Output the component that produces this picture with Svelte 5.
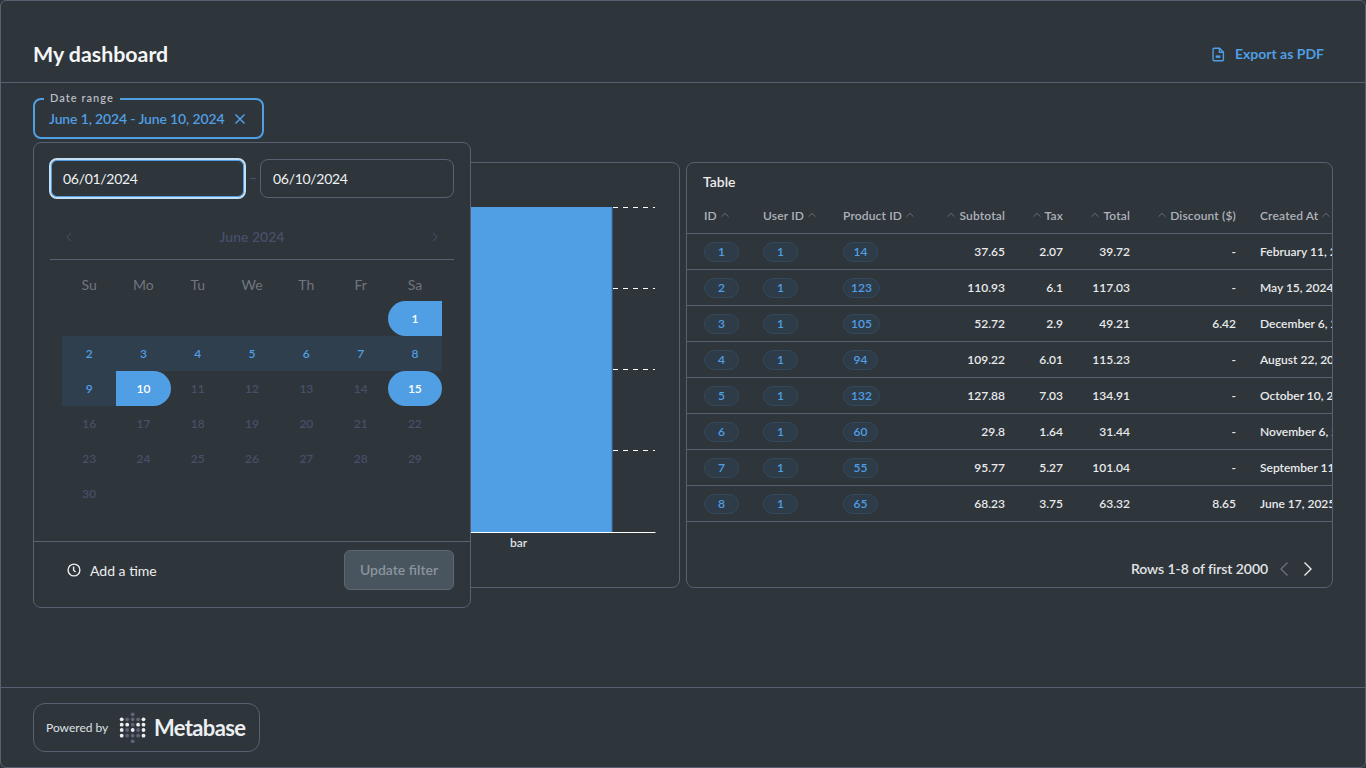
<script>
  const dayNames = ['Su', 'Mo', 'Tu', 'We', 'Th', 'Fr', 'Sa'];
  const days = [];
  for (let i = 0; i < 6; i++) days.push({ n: null, c: '' });
  for (let d = 1; d <= 30; d++) {
    let c = 'off';
    if (d === 1) c = 'start';
    else if (d === 10) c = 'end';
    else if (d === 15) c = 'solo';
    else if (d < 10) c = 'range';
    days.push({ n: d, c });
  }
  const columns = [
    { label: 'ID', kind: 'l', cls: 'c1' },
    { label: 'User ID', kind: 'l', cls: 'c2' },
    { label: 'Product ID', kind: 'l', cls: 'c3' },
    { label: 'Subtotal', kind: 'r', cls: 'c4' },
    { label: 'Tax', kind: 'r', cls: 'c5' },
    { label: 'Total', kind: 'r', cls: 'c6' },
    { label: 'Discount ($)', kind: 'r', cls: 'c7' },
    { label: 'Created At', kind: 'l', cls: 'c8' }
  ];
  const rows = [
    [1, 1, 14, '37.65', '2.07', '39.72', '-', 'February 11, 2025, 9:40 PM'],
    [2, 1, 123, '110.93', '6.1', '117.03', '-', 'May 15, 2024, 8:04 AM'],
    [3, 1, 105, '52.72', '2.9', '49.21', '6.42', 'December 6, 2024, 10:22 PM'],
    [4, 1, 94, '109.22', '6.01', '115.23', '-', 'August 22, 2025, 4:30 AM'],
    [5, 1, 132, '127.88', '7.03', '134.91', '-', 'October 10, 2024, 3:34 AM'],
    [6, 1, 60, '29.8', '1.64', '31.44', '-', 'November 6, 2025, 4:06 PM'],
    [7, 1, 55, '95.77', '5.27', '101.04', '-', 'September 11, 2025, 3:03 AM'],
    [8, 1, 65, '68.23', '3.75', '63.32', '8.65', 'June 17, 2025, 2:37 AM']
  ];
  const gridlines = [207.5, 288.5, 369.5, 450.5];
  const logoX = [2.7, 8.2, 13.7, 19.1, 24.5];
  const logoY = [7.3, 12.7, 18, 23.7];
  const bright = new Set(['0,0', '4,0', '0,1', '1,1', '3,1', '4,1', '0,2', '2,2', '4,2', '0,3', '4,3']);
  const logoDots = [];
  logoY.forEach((y, r) => logoX.forEach((x, c) => logoDots.push({ x, y, on: bright.has(c + ',' + r) })));
</script>

<div class="page">
  <header class="head">
    <h1>My dashboard</h1>
    <button class="export">
      <svg width="13" height="15" viewBox="0 0 14 16" fill="none" stroke="currentColor" stroke-width="1.5">
        <path d="M2.5 1.2h5.6l4.2 4.2v8a1.4 1.4 0 0 1-1.4 1.4H2.5a1.4 1.4 0 0 1-1.4-1.4V2.6a1.4 1.4 0 0 1 1.4-1.4z" />
        <path d="M8 1.4v4.2h4.2" />
        <rect x="4" y="9" width="5" height="2.6" fill="currentColor" stroke="none" />
      </svg>
      Export as PDF
    </button>
  </header>

  <main class="body">
    <div class="filter-row">
      <div class="filter">
        <span class="legend">Date range</span>
        <span class="value">June 1, 2024 - June 10, 2024</span>
        <svg class="clear" width="12" height="12" viewBox="0 0 12 12" stroke="currentColor" stroke-width="1.5" fill="none">
          <path d="M1.5 1.5l9 9M10.5 1.5l-9 9" />
        </svg>
      </div>
    </div>

    <div class="cards">
      <section class="card chart-card">
        <svg class="chart" width="645" height="424" viewBox="34 163 645 424">
          <rect x="100" y="207" width="512" height="325" fill="#509ee3" />
          <rect x="611.5" y="207" width="1" height="325" fill="#4079b5" />
          {#each gridlines as y}
            <line x1="612" x2="655" y1={y} y2={y} stroke="#fff" stroke-dasharray="5 5" stroke-dashoffset="-1" />
          {/each}
          <line x1="100" x2="655.5" y1="532.5" y2="532.5" stroke="#fff" />
          <text x="518.5" y="547" text-anchor="middle">bar</text>
        </svg>
      </section>

      <section class="card table-card">
        <h2>Table</h2>
        <div class="table">
          <div class="row header">
            {#each columns as col}
              <div class="cell {col.cls} {col.kind}">
                {#if col.kind === 'r'}
                  <svg class="sort" width="10" height="6" viewBox="0 0 10 6" fill="none" stroke="currentColor"><path d="M1.5 4.7L5 1.3l3.5 3.4" /></svg>
                {/if}
                <span>{col.label}</span>
                {#if col.kind === 'l'}
                  <svg class="sort" width="10" height="6" viewBox="0 0 10 6" fill="none" stroke="currentColor"><path d="M1.5 4.7L5 1.3l3.5 3.4" /></svg>
                {/if}
              </div>
            {/each}
          </div>
          {#each rows as r}
            <div class="row">
              {#each r as v, i}
                <div class="cell {columns[i].cls} {columns[i].kind}">
                  {#if i < 3}
                    <span class="pill">{v}</span>
                  {:else}
                    <span class="val">{v}</span>
                  {/if}
                </div>
              {/each}
            </div>
          {/each}
        </div>
        <div class="pager">
          <span>Rows 1-8 of first 2000</span>
          <svg class="prev" width="10" height="16" viewBox="0 0 10 16" fill="none" stroke="currentColor" stroke-width="1.4"><path d="M8.5 1.5L2 8l6.5 6.5" /></svg>
          <svg class="next" width="10" height="16" viewBox="0 0 10 16" fill="none" stroke="currentColor" stroke-width="1.4"><path d="M1.5 1.5L8 8l-6.5 6.5" /></svg>
        </div>
      </section>
    </div>

    <div class="popover">
      <div class="inputs">
        <div class="input focus">06/01/2024</div>
        <span class="dash"></span>
        <div class="input">06/10/2024</div>
      </div>
      <div class="month">
        <svg width="6" height="10" viewBox="0 0 6 10" fill="none" stroke="currentColor"><path d="M5 1L1 5l4 4" /></svg>
        <span>June 2024</span>
        <svg width="6" height="10" viewBox="0 0 6 10" fill="none" stroke="currentColor"><path d="M1 1l4 4-4 4" /></svg>
      </div>
      <div class="names">
        {#each dayNames as d}<span>{d}</span>{/each}
      </div>
      <div class="days">
        {#each days as d}
          <span class="day {d.c}">{d.n ?? ''}</span>
        {/each}
      </div>
      <div class="pop-foot">
        <span class="add-time">
          <svg width="14" height="14" viewBox="0 0 14 14" fill="none" stroke="currentColor" stroke-width="1.4">
            <circle cx="7" cy="7" r="5.9" />
            <path d="M6.6 3.6v3.6l2 1.9" />
          </svg>
          Add a time
        </span>
        <button class="update">Update filter</button>
      </div>
    </div>
  </main>

  <footer class="foot">
    <div class="powered">
      <span class="by">Powered by</span>
      <svg width="27" height="31" viewBox="0 0 27 31">
        <circle cx="13.7" cy="2.3" r="1.9" fill="#5f6577" />
        {#each logoDots as d}
          <circle cx={d.x} cy={d.y} r="1.9" fill={d.on ? '#eceff1' : '#5f6577'} />
        {/each}
        <circle cx="13.7" cy="29.3" r="1.9" fill="#5f6577" />
      </svg>
      <span class="brand">Metabase</span>
    </div>
  </footer>
</div>

<style>
  :global(body) {
    margin: 0;
    background: #2e353b;
  }
  .page {
    box-sizing: border-box;
    width: 1366px;
    height: 768px;
    border: 1px solid #5a6072;
    border-radius: 6px;
    background: #2e353b;
    font-family: Lato, sans-serif;
    color: #fff;
    display: flex;
    flex-direction: column;
    overflow: hidden;
  }
  .head {
    box-sizing: border-box;
    height: 82px;
    flex: none;
    padding: 33px 32px 0;
    display: flex;
    justify-content: space-between;
    align-items: flex-start;
    border-bottom: 1px solid #5a6072;
  }
  h1 {
    margin: -1px 0 0;
    font-size: 21.35px;
    line-height: 42px;
    font-weight: 700;
    color: #f4f5f6;
    height: 42px;
  }
  .export {
    background: none;
    border: 0;
    padding: 0 9px 0 0;
    color: #509ee3;
    font: 700 14px/42px Lato, sans-serif;
    display: flex;
    align-items: center;
    gap: 10px;
    height: 42px;
    margin-top: -1px;
  }
  .body {
    position: relative;
    flex: 1;
    padding: 15px 32px 0;
    min-height: 0;
  }
  .filter-row {
    height: 64px;
  }
  .filter {
    position: relative;
    box-sizing: border-box;
    width: 231px;
    height: 41px;
    border: 2px solid #509ee3;
    border-radius: 8px;
    display: flex;
    align-items: center;
    padding: 0 16px 0 14px;
    color: #509ee3;
    font-weight: 600;
    font-size: 14px;
  }
  .legend {
    position: absolute;
    top: -9px;
    left: 9px;
    padding: 0 6px;
    background: #2e353b;
    color: #b8bbc3;
    font-size: 11px;
    line-height: 13px;
    font-weight: 600;
    letter-spacing: 1.05px;
  }
  .value {
    padding-bottom: 1px;
    white-space: nowrap;
    letter-spacing: -0.14px;
  }
  .clear {
    margin-left: auto;
    flex: none;
  }
  .cards {
    display: grid;
    grid-template-columns: 647px 647px;
    column-gap: 6px;
    height: 426px;
  }
  .card {
    box-sizing: border-box;
    border: 1px solid #5a6072;
    border-radius: 8px;
    background: #2e353b;
    overflow: hidden;
    min-width: 0;
  }
  .chart {
    display: block;
  }
  .chart text {
    font: 600 12px Lato, sans-serif;
    fill: #dfe1e4;
  }
  .table-card {
    display: flex;
    flex-direction: column;
  }
  h2 {
    margin: 0;
    padding: 10px 16px 0;
    font-size: 14px;
    line-height: 17px;
    font-weight: 600;
    color: #ebeced;
    height: 26px;
    flex: none;
  }
  .table {
    width: 645px;
    overflow: hidden;
    flex: none;
  }
  .row {
    display: grid;
    grid-template-columns: 59px 80px 76px 86px 58px 67px 106px 200px;
    width: max-content;
    padding-left: 17px;
    height: 36px;
    box-sizing: border-box;
    border-bottom: 1px solid #5a6072;
    align-items: center;
    min-width: 628px;
  }
  .row.header {
    height: 35px;
    padding-bottom: 2px;
    color: #afb2ba;
    font-size: 12px;
    font-weight: 600;
    letter-spacing: 0.16px;
  }
  .cell {
    display: flex;
    align-items: center;
    gap: 3px;
    white-space: nowrap;
    font-size: 12px;
    min-width: 0;
  }
  .cell.r {
    justify-content: flex-end;
  }
  .cell.c8 {
    margin-left: 24px;
    width: 200px;
  }
  .sort {
    color: #696e7a;
    flex: none;
  }
  .pill {
    box-sizing: border-box;
    min-width: 35px;
    height: 20px;
    padding: 0 7px;
    border-radius: 10px;
    border: 1px solid #354859;
    background: #2e3c49;
    color: #509ee3;
    font-weight: 600;
    font-size: 12px;
    line-height: 18px;
    text-align: center;
  }
  .val {
    font-weight: 600;
    color: #e9eaec;
  }
  .pager {
    flex: 1;
    display: flex;
    justify-content: flex-end;
    align-items: center;
    padding: 28px 19px 0 0;
    font-size: 14px;
    font-weight: 600;
    color: #e3e4e6;
  }
  .pager span {
    letter-spacing: -0.07px;
  }
  .prev {
    color: #6c7079;
    margin-left: 11px;
  }
  .next {
    color: #eceded;
    margin-left: 14px;
  }
  .popover {
    position: absolute;
    left: 32px;
    top: 59px;
    box-sizing: border-box;
    width: 438px;
    height: 466px;
    border: 1px solid #5a6072;
    border-radius: 8px;
    background: #2e353b;
    display: flex;
    flex-direction: column;
    padding: 15px 16px 0;
  }
  .inputs {
    display: grid;
    grid-template-columns: 197px 14px 194px;
    align-items: center;
    margin-left: -1px;
    width: 405px;
  }
  .input {
    box-sizing: border-box;
    height: 39px;
    border: 1px solid #5a6072;
    border-radius: 8px;
    padding: 0 12px;
    font-size: 14px;
    font-weight: 400;
    line-height: 38px;
    color: #f0f1f2;
    letter-spacing: -0.3px;
  }
  .input.focus {
    height: 41px;
    border: 2px solid #c3def5;
    box-shadow: inset 0 0 0 1px #509ee3;
  }
  .dash {
    height: 1px;
    width: 6px;
    background: #46506a;
    justify-self: center;
    margin-left: -1px;
  }
  .month {
    box-sizing: border-box;
    display: flex;
    justify-content: space-between;
    align-items: center;
    margin-top: 20px;
    height: 41px;
    padding: 0 16px 5px;
    border-bottom: 1px solid #5a6072;
    color: #465069;
    font-size: 14px;
    font-weight: 600;
    width: 404px;
  }
  .names, .days {
    display: grid;
    grid-template-columns: 54.3px 54.3px 54.3px 54.3px 54.3px 54.3px 54.2px;
    width: 380px;
    margin-left: 12px;
  }
  .names {
    box-sizing: border-box;
    height: 41px;
    align-items: center;
    text-align: center;
    font-size: 14px;
    color: #71757f;
    padding-top: 7px;
  }
  .days {
    grid-auto-rows: 35px;
    height: 210px;
    align-items: stretch;
  }
  .day {
    display: flex;
    align-items: center;
    justify-content: center;
    font-size: 12px;
    font-weight: 600;
    color: #465069;
  }
  .day.range {
    background: #2f3f4e;
    color: #509ee3;
  }
  .day.start, .day.end, .day.solo {
    background: #509ee3;
    color: #fff;
  }
  .day.start {
    border-radius: 18px 0 0 18px;
  }
  .day.end {
    border-radius: 0 18px 18px 0;
  }
  .day.solo {
    border-radius: 18px;
  }
  .pop-foot {
    box-sizing: border-box;
    margin: 30px -16px 0;
    height: 65px;
    border-top: 1px solid #5a6072;
    padding: 8px 16px 0 33px;
    display: flex;
    justify-content: space-between;
    align-items: flex-start;
  }
  .add-time {
    display: flex;
    align-items: center;
    gap: 9px;
    height: 40px;
    font-size: 14px;
    font-weight: 400;
    color: #eceded;
  }
  .add-time svg {
    margin-top: -1px;
  }
  .update {
    box-sizing: border-box;
    width: 110px;
    height: 40px;
    border: 1px solid #5e6672;
    border-radius: 6px;
    background: #48545e;
    color: #8b949d;
    font: 600 14px Lato, sans-serif;
    padding: 0 0 2px;
  }
  .foot {
    box-sizing: border-box;
    flex: none;
    height: 80px;
    border-top: 1px solid #5a6072;
    padding: 15px 32px 0;
  }
  .powered {
    box-sizing: border-box;
    width: 227px;
    height: 49px;
    border: 1px solid #5a6072;
    border-radius: 12px;
    display: flex;
    align-items: center;
    padding-left: 12px;
  }
  .by {
    font-size: 12px;
    color: #dfe1e4;
    width: 73px;
    flex: none;
  }
  .brand {
    font-size: 22px;
    font-weight: 700;
    color: #eceff1;
    margin-left: 8px;
    letter-spacing: -0.65px;
  }
</style>
